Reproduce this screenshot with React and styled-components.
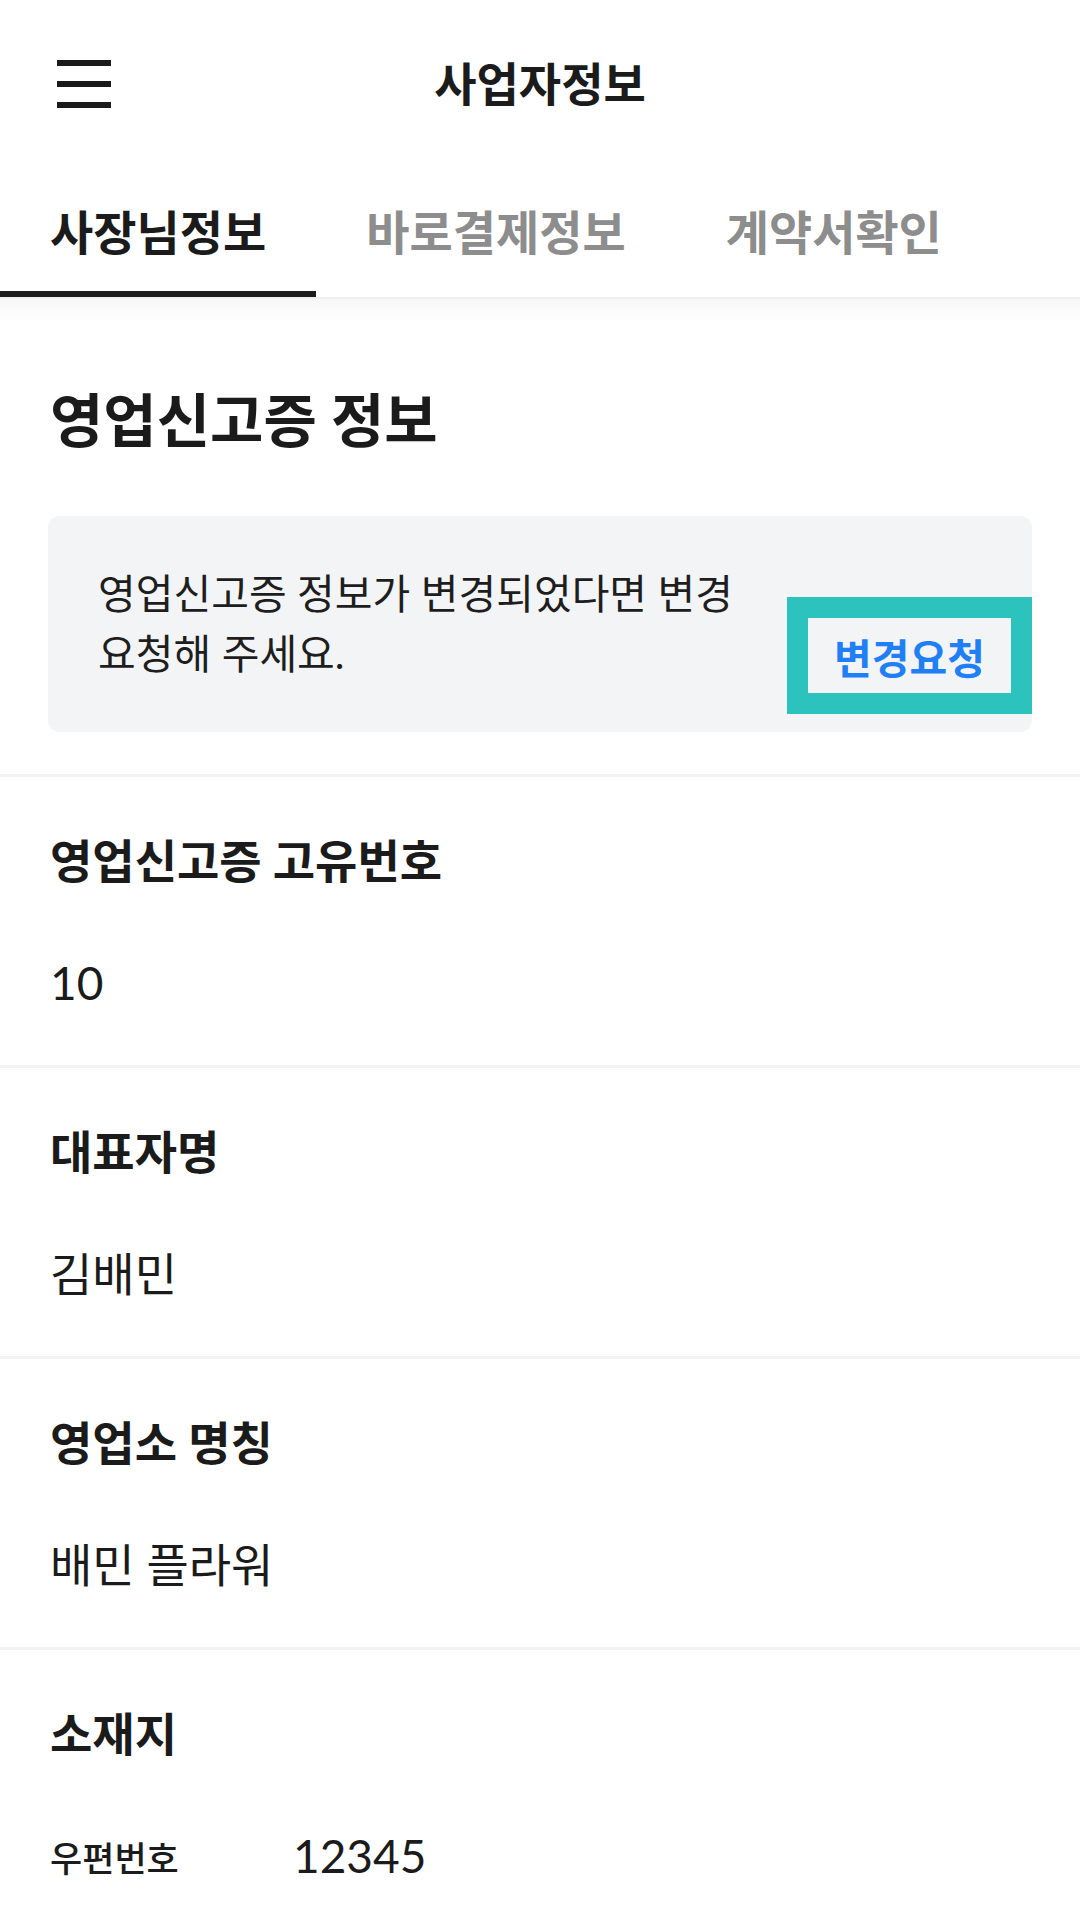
import React from "react";
import styled, { createGlobalStyle } from "styled-components";

const GlobalStyle = createGlobalStyle`
  body {
    margin: 0;
    background: #fff;
    font-family: Lato, "Noto Sans CJK KR", sans-serif;
    color: #1b1b1b;
  }
  * {
    box-sizing: border-box;
  }
`;

const Page = styled.div`
  width: 1080px;
  min-height: 1920px;
  overflow: hidden;
`;

const Header = styled.header`
  display: grid;
  grid-template-columns: 1fr auto 1fr;
  align-items: center;
  height: 168px;
`;

const Burger = styled.button`
  justify-self: start;
  display: flex;
  flex-direction: column;
  gap: 15px;
  margin-left: 57px;
  padding: 0;
  border: none;
  background: none;

  span {
    display: block;
    width: 54px;
    height: 6px;
    background: #1a1a1a;
  }
`;

const Title = styled.h1`
  margin: 0;
  font-size: 46px;
  font-weight: 700;
  line-height: 60px;
`;

const TabBar = styled.nav`
  display: flex;
  border-bottom: 2px solid #efefef;
`;

const Tab = styled.div`
  padding: 34px 50px 29px;
  font-size: 47px;
  font-weight: 700;
  line-height: 60px;
  color: ${(p) => (p.$active ? "#1b1b1b" : "#8d8d8d")};
  border-bottom: 6px solid ${(p) => (p.$active ? "#1b1b1b" : "transparent")};
`;

const Shade = styled.div`
  height: 24px;
  background: linear-gradient(#f7f7f7, #fff);
`;

const NoticeSection = styled.section`
  padding: 59px 48px 42px;
  border-bottom: 3px solid #f2f2f2;
`;

const Heading = styled.h2`
  margin: 0 0 58px;
  padding-left: 2px;
  font-size: 58px;
  font-weight: 700;
  line-height: 76px;
`;

const NoticeBox = styled.div`
  display: flex;
  gap: 24px;
  padding-left: 50px;
  background: #f3f4f6;
  border-radius: 12px;
`;

const NoticeText = styled.p`
  flex: 1;
  margin: 0;
  padding: 48px 0;
  font-size: 41px;
  line-height: 60px;
  word-break: keep-all;
  color: #1e1e1e;
`;

const ChangeButton = styled.button`
  align-self: flex-end;
  margin-bottom: 18px;
  width: 245px;
  height: 117px;
  padding: 0;
  border: 21px solid #2cc2bd;
  background: transparent;
  font-family: inherit;
  font-size: 41px;
  font-weight: 700;
  color: #1f7ff6;
`;

const Field = styled.section`
  padding: 50px 50px 48px;
  border-bottom: 3px solid #f2f2f2;

  &:last-child {
    border-bottom: none;
  }
`;

const Label = styled.h3`
  margin: 0 0 54px;
  font-size: 46px;
  font-weight: 700;
  line-height: 68px;
`;

const Value = styled.div`
  font-size: 46px;
  font-weight: 400;
  line-height: 68px;
`;

const AddressRow = styled.div`
  display: flex;
  align-items: center;
`;

const SubLabel = styled.span`
  width: 243px;
  font-size: 35px;
  font-weight: 500;
`;

const fields = [
  { label: "영업신고증 고유번호", value: "10" },
  { label: "대표자명", value: "김배민" },
  { label: "영업소 명칭", value: "배민 플라워" },
];

export default function App() {
  return (
    <Page>
      <GlobalStyle />
      <Header>
        <Burger aria-label="메뉴">
          <span />
          <span />
          <span />
        </Burger>
        <Title>사업자정보</Title>
        <div />
      </Header>
      <TabBar>
        <Tab $active>사장님정보</Tab>
        <Tab>바로결제정보</Tab>
        <Tab>계약서확인</Tab>
      </TabBar>
      <Shade />

      <NoticeSection>
        <Heading>영업신고증 정보</Heading>
        <NoticeBox>
          <NoticeText>
            영업신고증 정보가 변경되었다면 변경 요청해 주세요.
          </NoticeText>
          <ChangeButton>변경요청</ChangeButton>
        </NoticeBox>
      </NoticeSection>

      {fields.map((f) => (
        <Field key={f.label}>
          <Label>{f.label}</Label>
          <Value>{f.value}</Value>
        </Field>
      ))}

      <Field>
        <Label>소재지</Label>
        <AddressRow>
          <SubLabel>우편번호</SubLabel>
          <Value>12345</Value>
        </AddressRow>
      </Field>
    </Page>
  );
}
